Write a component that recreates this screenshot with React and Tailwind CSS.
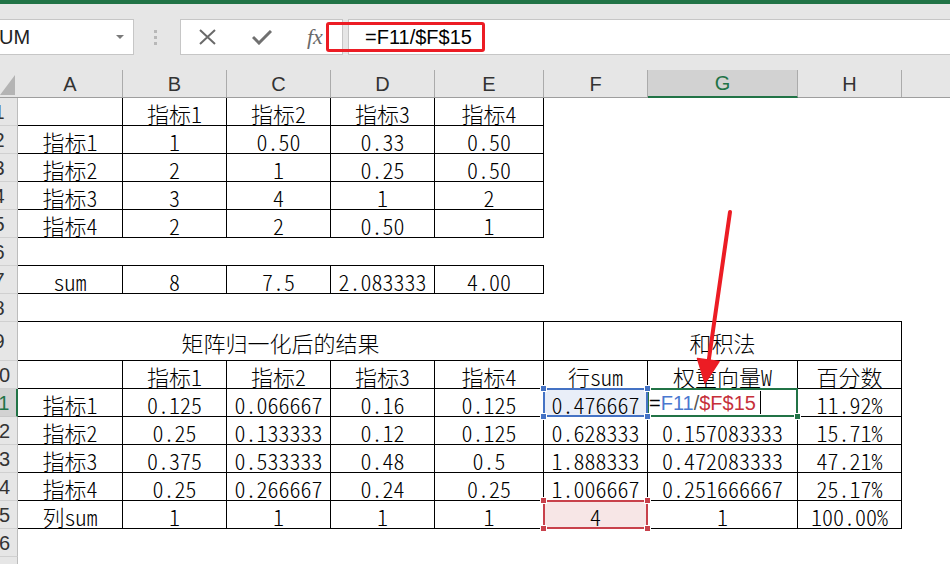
import React from 'react'

const CELL_FONT = "font-['Noto_Sans_CJK_SC',sans-serif] font-light [font-feature-settings:'hwid'] text-[22px] leading-none text-black"
const UI_FONT = "font-['Liberation_Sans',Arial,sans-serif]"

const W = ['w-[105px]', 'w-[104px]', 'w-[104px]', 'w-[104px]', 'w-[109px]', 'w-[104px]', 'w-[150px]', 'w-[104px]']
const LETTERS = ['A', 'B', 'C', 'D', 'E', 'F', 'G', 'H']

const BORDER = {
  rb: 'border-r border-b border-black',
  b: 'border-b border-black',
  '': '',
}

// top block (A..E bordered), full block (A..H bordered)
const top = (...t) => [...t.map(x => [x, 'rb']), ['', ''], ['', ''], ['', '']]
const full = (...t) => t.map(x => [x, 'rb'])
const blank = (b = '') => LETTERS.map(() => ['', b])

const ROWS = [
  { n: 1, h: 'h-[28px]', cells: top('', '指标1', '指标2', '指标3', '指标4') },
  { n: 2, h: 'h-[28px]', cells: top('指标1', '1', '0.50', '0.33', '0.50') },
  { n: 3, h: 'h-[28px]', cells: top('指标2', '2', '1', '0.25', '0.50') },
  { n: 4, h: 'h-[28px]', cells: top('指标3', '3', '4', '1', '2') },
  { n: 5, h: 'h-[28px]', cells: top('指标4', '2', '2', '0.50', '1') },
  { n: 6, h: 'h-[28px]', cells: [['', 'b'], ['', 'b'], ['', 'b'], ['', 'b'], ['', 'b'], ['', ''], ['', ''], ['', '']] },
  { n: 7, h: 'h-[28px]', cells: top('sum', '8', '7.5', '2.083333', '4.00') },
  { n: 8, h: 'h-[28px]', cells: blank('b') },
  { n: 9, h: 'h-[39px]', merged: true },
  { n: 10, h: 'h-[28px]', cells: full('', '指标1', '指标2', '指标3', '指标4', '行sum', '权重向量W', '百分数') },
  { n: 11, h: 'h-[28px]', cells: full('指标1', '0.125', '0.066667', '0.16', '0.125', '0.476667', '', '11.92%') },
  { n: 12, h: 'h-[28px]', cells: full('指标2', '0.25', '0.133333', '0.12', '0.125', '0.628333', '0.157083333', '15.71%') },
  { n: 13, h: 'h-[28px]', cells: full('指标3', '0.375', '0.533333', '0.48', '0.5', '1.888333', '0.472083333', '47.21%') },
  { n: 14, h: 'h-[28px]', cells: full('指标4', '0.25', '0.266667', '0.24', '0.25', '1.006667', '0.251666667', '25.17%') },
  { n: 15, h: 'h-[28px]', cells: full('列sum', '1', '1', '1', '1', '4', '1', '100.00%') },
  { n: 16, h: 'h-[28px]', cells: blank() },
  { n: 17, h: 'h-[28px]', cells: blank() },
]

function Handle({ pos, color }) {
  return <div className={`absolute ${pos} w-[7px] h-[7px] ${color} border border-white z-20`} />
}

function Cell({ w, border, className = '', children }) {
  return (
    <div className={`${w} ${BORDER[border]} shrink-0 relative flex items-center justify-center ${className}`}>
      {children}
    </div>
  )
}

function FormulaBar() {
  return (
    <div className="relative h-[66px] bg-[#e6e6e6] pt-[15px] flex items-start">
      <div className="w-[134px] h-[36px] shrink-0 bg-white border border-l-0 border-[#c6c6c6] flex items-center justify-between pr-[9px]">
        <span className={`${UI_FONT} text-[20px] text-[#222] -ml-[1px]`}>UM</span>
        <svg width="8" height="5" viewBox="0 0 8 5"><path d="M0 0h8L4 4z" fill="#7a7a7a" /></svg>
      </div>
      <div className="w-[46px] h-[36px] shrink-0 flex flex-col items-center justify-center gap-[3px] pr-[4px]">
        <span className="w-[3px] h-[3px] bg-[#b8b8b8]" />
        <span className="w-[3px] h-[3px] bg-[#b8b8b8]" />
        <span className="w-[3px] h-[3px] bg-[#b8b8b8]" />
      </div>
      <div className="w-[163px] h-[36px] shrink-0 bg-white border border-[#c6c6c6] flex items-center pl-[18px]">
        <svg width="17" height="16" viewBox="0 0 17 16">
          <path d="M1 1L16 15M16 1L1 15" stroke="#6a6a6a" strokeWidth="2" />
        </svg>
        <svg className="ml-[36px]" width="20" height="15" viewBox="0 0 20 15">
          <path d="M1 7L7 13L19 1" stroke="#707070" strokeWidth="3" fill="none" />
        </svg>
        <span className="ml-[35px] font-['Liberation_Serif',serif] italic text-[22px] text-[#6a6a6a] leading-none">fx</span>
      </div>
      <div className="ml-[5px] flex-1 h-[36px] bg-white border border-r-0 border-[#c6c6c6] flex items-center pl-[16px]">
        <span className={`${UI_FONT} text-[20px] text-black`}>=F11/$F$15</span>
      </div>
      <div className="absolute left-[326px] top-[18px] w-[159px] h-[30px] border-[3px] border-[#ec1c24] rounded-[3px]" />
    </div>
  )
}

function ColumnHeader() {
  return (
    <div className={`flex h-[28px] bg-[#e6e6e6] border-b border-[#9e9e9e] ${UI_FONT} text-[20px] text-[#333]`}>
      <div className="w-[18px] shrink-0 relative">
        <svg className="absolute left-0 top-[4px]" width="16" height="21" viewBox="0 0 16 21">
          <path d="M0 21H15V1z" fill="#b4b4b4" />
        </svg>
      </div>
      {LETTERS.map((l, i) => (
        <div
          key={l}
          className={
            l === 'G'
              ? `${W[i]} shrink-0 flex items-center justify-center bg-[#d2d2d2] text-[#217346] border-r border-[#ababab] border-b-2 border-b-[#217346] -mb-[1px]`
              : `${W[i]} shrink-0 flex items-center justify-center border-r border-[#ababab]`
          }
        >
          {l}
        </div>
      ))}
      <div className="flex-1" />
    </div>
  )
}

function EditText() {
  return (
    <div className={`absolute inset-0 flex items-center pl-[1px] z-30 ${UI_FONT} text-[20px]`}>
      <span className="text-black">=</span>
      <span className="text-[#4a78d0]">F11</span>
      <span className="text-[#555]">/</span>
      <span className="text-[#c6303a]">$F$15</span>
      <span className="ml-[4px] w-[1px] h-[23px] bg-black" />
    </div>
  )
}

function special(n, col, text) {
  if (n === 11 && col === 5) {
    return {
      className: 'bg-[#e9eef8]',
      content: (
        <>
          <span className="pt-[2px]">{text}</span>
          <div className="absolute -inset-[1px] border-2 border-[#4472c4] z-20" />
          <Handle pos="-left-[4px] -top-[4px]" color="bg-[#4472c4]" />
          <Handle pos="-right-[4px] -top-[4px]" color="bg-[#4472c4]" />
          <Handle pos="-left-[4px] -bottom-[4px]" color="bg-[#4472c4]" />
          <Handle pos="-right-[4px] -bottom-[4px]" color="bg-[#4472c4]" />
        </>
      ),
    }
  }
  if (n === 11 && col === 6) {
    return {
      className: '',
      content: (
        <>
          <div className="absolute -inset-[1px] border-2 border-[#217346] z-10" />
          <Handle pos="-right-[4px] -bottom-[4px]" color="bg-[#217346]" />
          <EditText />
        </>
      ),
    }
  }
  if (n === 15 && col === 5) {
    return {
      className: 'bg-[#f7e6e6]',
      content: (
        <>
          <span className="pt-[2px]">{text}</span>
          <div className="absolute -inset-[1px] border-2 border-[#c8414b] z-20" />
          <Handle pos="-left-[4px] -top-[4px]" color="bg-[#c8414b]" />
          <Handle pos="-right-[4px] -top-[4px]" color="bg-[#c8414b]" />
          <Handle pos="-left-[4px] -bottom-[4px]" color="bg-[#c8414b]" />
          <Handle pos="-right-[4px] -bottom-[4px]" color="bg-[#c8414b]" />
        </>
      ),
    }
  }
  return null
}

function Row({ row }) {
  const sel = row.n === 11
  return (
    <div className={`flex ${row.h}`}>
      <div
        className={
          sel
            ? `w-[18px] shrink-0 overflow-hidden flex items-center bg-[#d2d2d2] text-[#217346] border-r-2 border-r-[#217346] border-b border-b-[#c8c8c8] ${UI_FONT} text-[20px] leading-none`
            : `w-[18px] shrink-0 overflow-hidden flex items-center bg-[#e6e6e6] text-[#333] border-r border-r-[#bdbdbd] border-b border-b-[#d0d0d0] ${UI_FONT} text-[20px] leading-none`
        }
      >
        <div className="w-[36px] -ml-[19px] shrink-0 text-center">{row.n}</div>
      </div>
      <div className={`flex ${CELL_FONT}`}>
        {row.merged ? (
          <>
            <Cell w="w-[526px]" border="rb"><span className="pt-[2px]">矩阵归一化后的结果</span></Cell>
            <Cell w="w-[358px]" border="rb"><span className="pt-[2px]">和积法</span></Cell>
          </>
        ) : (
          row.cells.map(([text, border], i) => {
            const sp = special(row.n, i, text)
            return (
              <Cell key={i} w={W[i]} border={border} className={sp ? sp.className : ''}>
                {sp ? sp.content : text && <span className="pt-[2px]">{text}</span>}
              </Cell>
            )
          })
        )}
      </div>
      <div className="flex-1" />
    </div>
  )
}

function Arrow() {
  return (
    <svg className="absolute left-0 top-0 pointer-events-none z-40" width="950" height="564" viewBox="0 0 950 564">
      <line x1="730" y1="212" x2="708.5" y2="362" stroke="#ec1c24" strokeWidth="4" strokeLinecap="round" />
      <path d="M705 383L697.5 358.5L719 361.5z" fill="#ec1c24" stroke="#ec1c24" strokeWidth="1.5" strokeLinejoin="round" />
    </svg>
  )
}

export default function App() {
  return (
    <div className="relative w-[950px] h-[564px] overflow-hidden bg-white">
      <div className="h-[4px] bg-[#217346]" />
      <FormulaBar />
      <ColumnHeader />
      {ROWS.map(r => <Row key={r.n} row={r} />)}
      <Arrow />
    </div>
  )
}
